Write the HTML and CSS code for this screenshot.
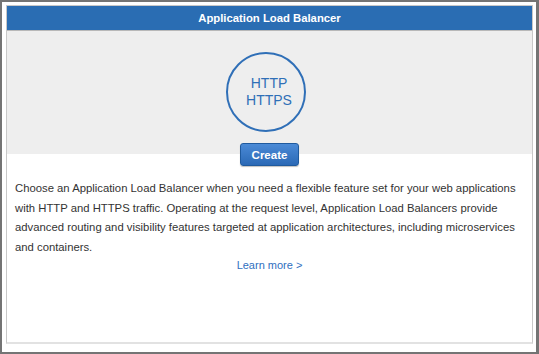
FILE: index.html
```html
<!DOCTYPE html>
<html lang="en">
<head>
    <meta charset="UTF-8">
    <meta name="viewport" content="width=device-width, initial-scale=1.0">
    <title>Application Load Balancer</title>
    <link rel="stylesheet" href="styles.css">
</head>
<body>
    <div class="frame">
        <div class="card">
            <div class="card-header">Application Load Balancer</div>
            <div class="hero">
                <div class="protocol-circle">
                    <span>HTTP</span>
                    <span>HTTPS</span>
                </div>
                <button class="create-btn">Create</button>
            </div>
            <p class="description">
                Choose an Application Load Balancer when you need a flexible feature set for your web applications
                with HTTP and HTTPS traffic. Operating at the request level, Application Load Balancers provide
                advanced routing and visibility features targeted at application architectures, including microservices
                and containers.
            </p>
            <div class="learn-more"><a href="#">Learn more &gt;</a></div>
        </div>
    </div>
</body>
</html>
```

FILE: styles.css
```css
* {
    margin: 0;
    padding: 0;
    box-sizing: border-box;
}
body {
    font-family: "Liberation Sans", Arial, Helvetica, sans-serif;
    background-color: #fff;
    width: 539px;
    height: 354px;
    overflow: hidden;
}
.frame {
    height: 354px;
    border: 2px solid #747474;
    border-right-width: 3px;
    padding: 3px 3px 8px 4px;
    background-color: #fff;
}
.card {
    height: 100%;
    border: 1px solid #c8c8c8;
    border-bottom: 2px solid #e2e2e2;
    display: flex;
    flex-direction: column;
}
.card-header {
    background-color: #2a6db3;
    color: #fff;
    font-size: 11.3px;
    font-weight: bold;
    text-align: center;
    height: 25px;
    line-height: 25px;
    border-bottom: 1px solid #b8b8b8;
}
.hero {
    background-color: #eeeeee;
    display: flex;
    flex-direction: column;
    align-items: center;
    padding-top: 21px;
}
.protocol-circle {
    width: 80px;
    height: 80px;
    border: 2px solid #2f6fb7;
    border-radius: 50%;
    display: flex;
    flex-direction: column;
    align-items: center;
    justify-content: center;
    color: #2f6fb7;
    font-size: 14px;
    line-height: 17px;
    margin-left: -7px;
    padding-left: 6px;
}
.create-btn {
    margin-top: 11px;
    margin-bottom: -12px;
    width: 59px;
    height: 23px;
    border: 1px solid #1f5a9e;
    border-radius: 3px;
    background: linear-gradient(#4a8ad6, #2b69b6);
    color: #fff;
    font-family: inherit;
    font-size: 11.5px;
    font-weight: bold;
    box-shadow: 0 1px 1px rgba(0, 0, 0, 0.25);
    cursor: pointer;
}
.description {
    padding: 25px 8px 0;
    font-size: 11.3px;
    line-height: 19.5px;
    color: #333;
}
.learn-more {
    text-align: center;
    margin-top: 2px;
    font-size: 11px;
    line-height: 13px;
}
.learn-more a {
    color: #2f6fc0;
    text-decoration: none;
}
```
